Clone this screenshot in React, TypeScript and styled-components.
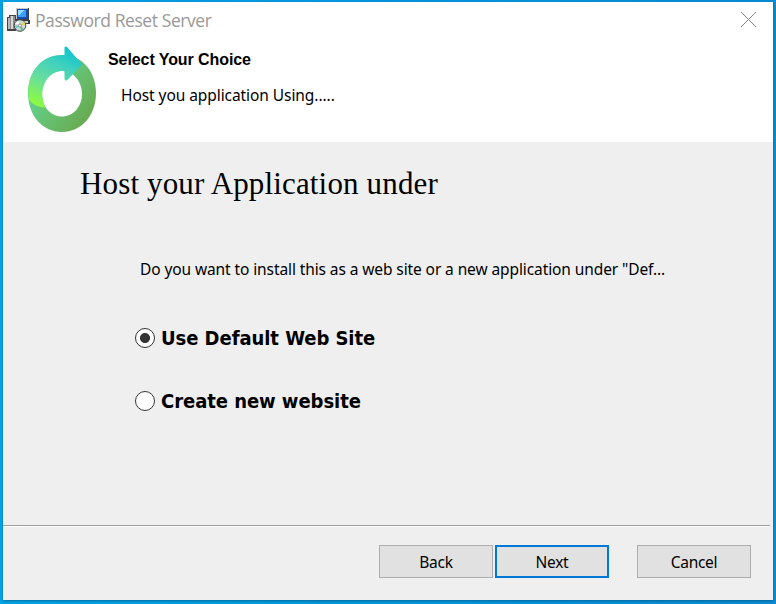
import React, { useState } from "react";
import styled, { createGlobalStyle } from "styled-components";

const GlobalStyle = createGlobalStyle`
  * { box-sizing: border-box; }
  html, body { margin: 0; padding: 0; overflow: hidden; }
`;

const Desktop = styled.div`
  width: 776px;
  height: 604px;
  padding: 2px 3px 4px;
  background: linear-gradient(90deg, #06a2e4 0%, #0595dc 50%, #0a8ad4 100%);
`;

const Dialog = styled.main`
  display: flex;
  flex-direction: column;
  width: 770px;
  height: 598px;
  background: #efefef;
  color: #000;
  font: 15.5px/20px "Noto Sans", sans-serif;
  box-shadow: 0 1px 2px rgba(0, 60, 90, 0.5);
`;

const Header = styled.header`
  height: 140px;
  background: #fff;
`;

const TitleBar = styled.div`
  display: flex;
  align-items: center;
  height: 36px;
  padding: 0 16px 0 3px;
`;

const Title = styled.span`
  flex: 1;
  margin-left: 5px;
  color: #999;
  font: 17.5px/24px "Open Sans", sans-serif;
  letter-spacing: -0.42px;
`;

const CloseButton = styled.button`
  display: flex;
  padding: 0;
  margin-top: -2px;
  border: 0;
  background: none;
`;

const Banner = styled.div`
  display: flex;
  padding: 7px 0 0 23px;
`;

const BannerText = styled.div`
  padding: 5px 0 0 12px;
`;

const StepTitle = styled.h2`
  margin: 0;
  font: bold 16px/20px "Liberation Sans", sans-serif;
  letter-spacing: -0.08px;
`;

const StepHint = styled.p`
  margin: 15px 0 0 13px;
  letter-spacing: -0.07px;
`;

const Content = styled.section`
  flex: 1;
  padding: 22px 0 0 77px;
`;

const Heading = styled.h1`
  margin: 0;
  font: 31px/40px "Liberation Serif", serif;
  letter-spacing: 0.15px;
`;

const Question = styled.p`
  margin: 55px 0 0 60px;
  white-space: nowrap;
  letter-spacing: -0.1px;
`;

const Choices = styled.div`
  display: grid;
  gap: 35px;
  margin: 45px 0 0 55px;
`;

const Choice = styled.label`
  display: flex;
  align-items: center;
  gap: 6px;
  height: 28px;
  font: bold 20px/28px "DejaVu Sans Condensed", "DejaVu Sans", sans-serif;
  font-stretch: condensed;
  letter-spacing: -0.05px;
`;

const Radio = styled.input`
  appearance: none;
  width: 20px;
  height: 20px;
  margin: 0;
  border: 1.4px solid #333;
  border-radius: 50%;
  background: #fff;
  &:checked {
    background: radial-gradient(circle, #333 4.6px, #fff 5.4px);
  }
`;

const Footer = styled.footer`
  display: flex;
  height: 75px;
  margin-right: 3px;
  padding: 18px 19px 0 0;
  justify-content: flex-end;
  border-top: 1px solid #a0a0a0;
  box-shadow: inset 0 1px #fff;
`;

const Button = styled.button<{ $primary?: boolean; $gap?: number }>`
  width: 114px;
  height: 33px;
  margin: 1px 0 0 ${(p) => p.$gap ?? 0}px;
  padding: 0;
  border: ${(p) => (p.$primary ? "2px solid #0078d7" : "1px solid #adadad")};
  background: #e1e1e1;
  color: #000;
  font: 15.5px/20px "Noto Sans", sans-serif;
  letter-spacing: -0.3px;
`;

const InstallerIcon = () => (
  <svg width="24" height="25" viewBox="0 0 24 25" shapeRendering="crispEdges">
    <path d="M1 9h2V7h7v16H1z" fill="#444" />
    <path d="M2 10h2v11H2z" fill="#b8b8b8" />
    <path d="M4 8h5v13H4z" fill="#8d8d8d" />
    <path d="M5 8h2v13H5z" fill="#d8d8d8" />
    <path d="M10 0h13v12h1v4h-4v2H9v-5h1z" fill="#3d3d3d" />
    <path d="M10 0h12v11H10z" fill="#c9cbc9" />
    <path d="M11 1h11v10H11z" fill="#174bb8" />
    <path d="M12 2h8v7h-8z" fill="#39a0f4" />
    <path d="M12 2h6l-4 5h-2z" fill="#90dcff" />
    <path d="M9 13h13v2H9z" fill="#d4d4d0" />
    <g shapeRendering="auto">
      <circle cx="14" cy="17.500" r="5.800" fill="#cfd9d5" stroke="#3c4444" />
      <path d="M14 17.500l-5-2 3-3z" fill="#f5f7f4" />
      <path d="M14 17.500l-5 0 1 3z" fill="#62cfc5" />
      <path d="M14 17.500l4-4 1.400 3z" fill="#e6dc4b" />
      <path d="M14 17.500l4 4-3 1.500z" fill="#63b58e" />
      <circle cx="14" cy="17.500" r="1.500" fill="#fff" stroke="#666" strokeWidth=".7" />
    </g>
  </svg>
);

const ResetLogo = () => (
  <svg width="70" height="88" viewBox="0 0 70 88">
    <defs>
      <linearGradient id="ring" x1="0" y1="0.3" x2="0.75" y2="0.9">
        <stop offset="0" stopColor="#65d39d" />
        <stop offset="0.35" stopColor="#65cb82" />
        <stop offset="1" stopColor="#68ad55" />
      </linearGradient>
      <linearGradient id="arrow" x1="0.75" y1="0" x2="0.3" y2="1">
        <stop offset="0" stopColor="#08c4d2" />
        <stop offset="0.3" stopColor="#3fd1bd" />
        <stop offset="0.62" stopColor="#66dda0" />
        <stop offset="1" stopColor="#8dfa43" />
      </linearGradient>
    </defs>
    <path
      fill="url(#ring)"
      fillRule="evenodd"
      d="M36 10C57 10 70 27 70 48C70 71 55 87 36 87C17 87 2 71 2 48C2 26 17 10 36 10ZM36 26C25 26 16 36 16 49C16 62 25 71.500 36 71.500C47 71.500 56 62 56 49C56 36 47 26 36 26Z"
    />
    <path
      fill="url(#arrow)"
      d="M38.500 2.500Q39 1 41 2L56 19.500L42 34.500Q39 37 38.500 34V26.300Q31 25 25 30C16 37 14 50 19 62.500C11 63 4 57 3 54C-1 28 15 9 38.500 10Z"
    />
  </svg>
);

export default function App() {
  const [choice, setChoice] = useState("default");
  return (
    <>
      <GlobalStyle />
      <Desktop>
        <Dialog>
          <Header>
            <TitleBar>
              <InstallerIcon />
              <Title>Password Reset Server</Title>
              <CloseButton aria-label="Close">
                <svg width="17" height="17" viewBox="0 0 17 17">
                  <path d="M1 1l15 15M16 1L1 16" stroke="#858585" fill="none" />
                </svg>
              </CloseButton>
            </TitleBar>
            <Banner>
              <ResetLogo />
              <BannerText>
                <StepTitle>Select Your Choice</StepTitle>
                <StepHint>Host you application Using.....</StepHint>
              </BannerText>
            </Banner>
          </Header>
          <Content>
            <Heading>Host your Application under</Heading>
            <Question>
              Do you want to install this as a web site or a new application under "Def...
            </Question>
            <Choices>
              <Choice>
                <Radio type="radio" name="host" checked={choice === "default"} onChange={() => setChoice("default")} />
                Use Default Web Site
              </Choice>
              <Choice>
                <Radio type="radio" name="host" checked={choice === "new"} onChange={() => setChoice("new")} />
                Create new website
              </Choice>
            </Choices>
          </Content>
          <Footer>
            <Button>Back</Button>
            <Button $primary $gap={2}>Next</Button>
            <Button $gap={28}>Cancel</Button>
          </Footer>
        </Dialog>
      </Desktop>
    </>
  );
}
